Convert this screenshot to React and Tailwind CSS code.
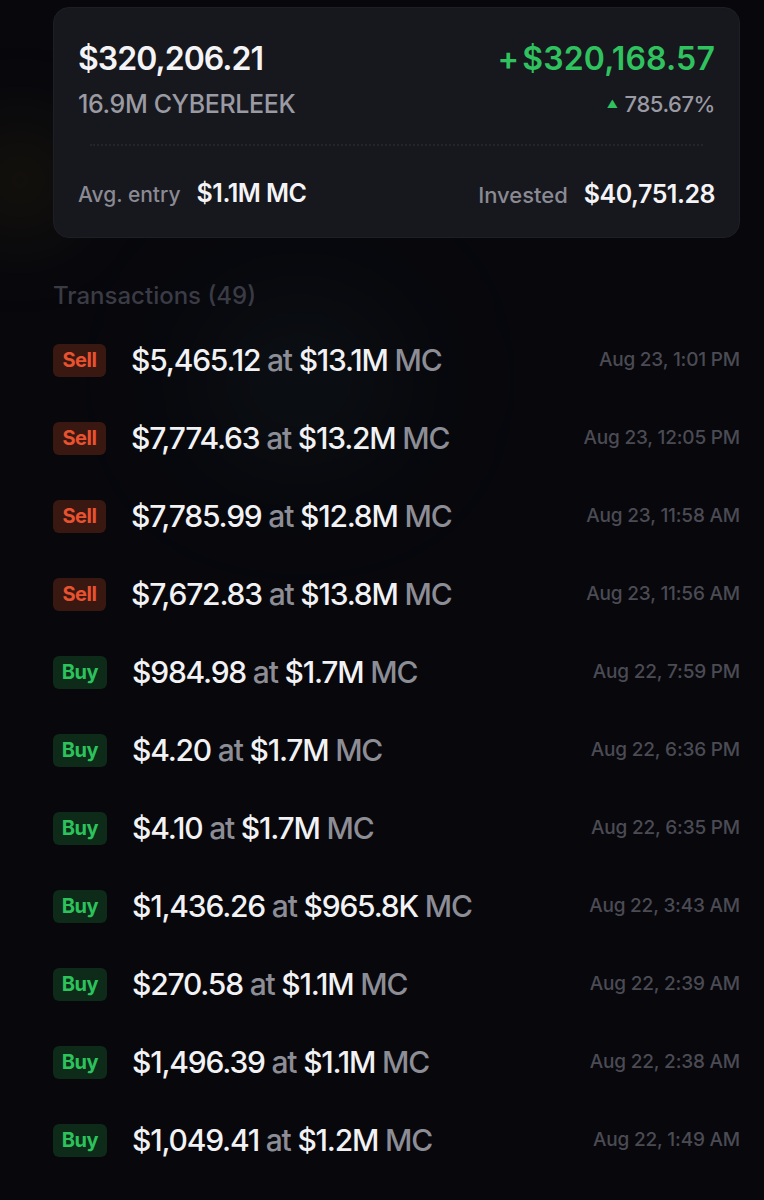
import React from "react";

const txs = [
  { t: "Sell", amt: "$5,465.12", mc: "$13.1M", date: "Aug 23, 1:01 PM" },
  { t: "Sell", amt: "$7,774.63", mc: "$13.2M", date: "Aug 23, 12:05 PM" },
  { t: "Sell", amt: "$7,785.99", mc: "$12.8M", date: "Aug 23, 11:58 AM" },
  { t: "Sell", amt: "$7,672.83", mc: "$13.8M", date: "Aug 23, 11:56 AM" },
  { t: "Buy", amt: "$984.98", mc: "$1.7M", date: "Aug 22, 7:59 PM" },
  { t: "Buy", amt: "$4.20", mc: "$1.7M", date: "Aug 22, 6:36 PM" },
  { t: "Buy", amt: "$4.10", mc: "$1.7M", date: "Aug 22, 6:35 PM" },
  { t: "Buy", amt: "$1,436.26", mc: "$965.8K", date: "Aug 22, 3:43 AM" },
  { t: "Buy", amt: "$270.58", mc: "$1.1M", date: "Aug 22, 2:39 AM" },
  { t: "Buy", amt: "$1,496.39", mc: "$1.1M", date: "Aug 22, 2:38 AM" },
  { t: "Buy", amt: "$1,049.41", mc: "$1.2M", date: "Aug 22, 1:49 AM" },
];

function Badge({ t }) {
  if (t === "Sell") {
    return (
      <div className="flex h-[33px] w-[53px] shrink-0 items-center justify-center rounded-[6px] bg-[#3a1812] text-[20px] font-bold tracking-[-0.02em] text-[#e8522f]">
        Sell
      </div>
    );
  }
  return (
    <div className="flex h-[33px] w-[54px] shrink-0 items-center justify-center rounded-[6px] bg-[#0e2a18] text-[20px] font-bold tracking-[-0.02em] text-[#2cc25c]">
      Buy
    </div>
  );
}

export default function App() {
  return (
    <div
      className="relative h-[1200px] w-[764px] overflow-hidden bg-[#07070c] pl-[53px] pr-[24px] pt-[7px]"
      style={{ fontFamily: "Inter, 'Liberation Sans', sans-serif" }}
    >
      <div className="pointer-events-none absolute left-[-40px] top-[120px] h-[120px] w-[120px] rounded-full bg-[#3a3010] opacity-30 blur-2xl" />
      <div className="pointer-events-none absolute left-[200px] top-[300px] h-[160px] w-[200px] rounded-full bg-[#1a2a2a] opacity-30 blur-3xl" />

      <div className="relative rounded-[16px] border border-[#1e1e26] bg-[#17171e] px-[24px] pb-[27px] pt-[33px]">
        <div className="flex items-start justify-between">
          <div className="text-[32px] font-semibold leading-[36px] tracking-[-0.03em] text-[#f4f4f6]">
            $320,206.21
          </div>
          <div className="text-[32px] font-semibold leading-[36px] tracking-[0.005em] text-[#2fc25f]">
            <span className="mr-[3px]">+</span>$320,168.57
          </div>
        </div>
        <div className="mt-[13px] flex items-center justify-between">
          <div className="text-[25px] font-medium leading-[28px] tracking-[-0.015em] text-[#9a9aa3]">
            16.9M CYBERLEEK
          </div>
          <div className="flex items-center text-[22px] font-medium leading-[28px] tracking-[-0.02em] text-[#9a9aa3]">
            <span className="mr-[7px] text-[11px] text-[#2fc25f]">▲</span>785.67%
          </div>
        </div>
        <div className="mx-[12px] mt-[26px] border-t-2 border-dotted border-[#24242d]" />
        <div className="mt-[32px] flex items-center justify-between leading-[30px]">
          <div className="flex items-baseline gap-[16px]">
            <span className="text-[21px] font-medium tracking-[0em] text-[#8a8a93]">Avg. entry</span>
            <span className="text-[25px] font-semibold tracking-[-0.02em] text-[#f4f4f6]">$1.1M MC</span>
          </div>
          <div className="flex items-baseline gap-[16px]">
            <span className="text-[22px] font-medium tracking-[0em] text-[#8a8a93]">Invested</span>
            <span className="text-[25px] font-semibold tracking-[-0.02em] text-[#f4f4f6]">$40,751.28</span>
          </div>
        </div>
      </div>

      <div className="relative mt-[44px] text-[24px] font-medium leading-[28px] tracking-[0em] text-[#3b3b45]">
        Transactions (49)
      </div>

      <div className="relative mt-[11px] flex flex-col">
        {txs.map((x, i) => (
          <div key={i} className="flex h-[78px] items-center justify-between">
            <div className="flex items-center gap-[25px]">
              <Badge t={x.t} />
              <div className="text-[30px] font-medium tracking-[-0.04em] text-[#f2f2f4]">
                {x.amt}
                <span className="text-[#8d8d96]"> at </span>
                {x.mc}
                <span className="text-[#8d8d96]"> MC</span>
              </div>
            </div>
            <div className="text-[19px] font-medium tracking-[-0.01em] text-[#4b4b54]">{x.date}</div>
          </div>
        ))}
      </div>
    </div>
  );
}
